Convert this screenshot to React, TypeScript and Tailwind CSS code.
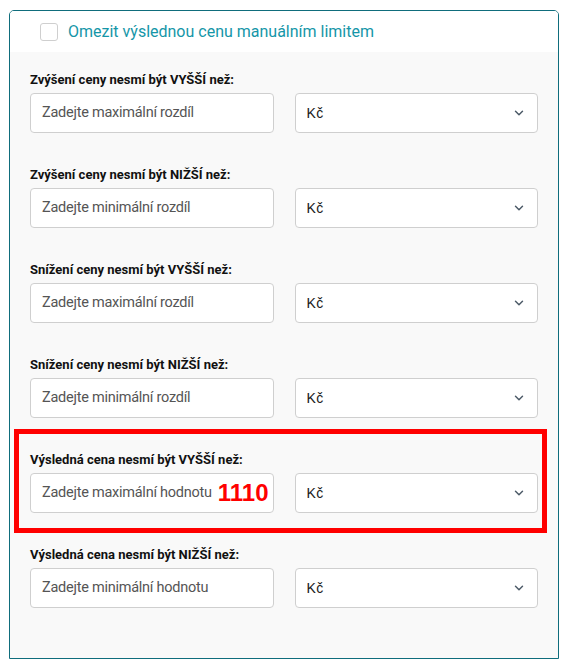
import { ChevronDown } from 'lucide-react'

type Row = {
  label: string
  placeholder: string
  highlight?: string
}

const ROWS: Row[] = [
  { label: 'Zvýšení ceny nesmí být VYŠŠÍ než:', placeholder: 'Zadejte maximální rozdíl' },
  { label: 'Zvýšení ceny nesmí být NIŽŠÍ než:', placeholder: 'Zadejte minimální rozdíl' },
  { label: 'Snížení ceny nesmí být VYŠŠÍ než:', placeholder: 'Zadejte maximální rozdíl' },
  { label: 'Snížení ceny nesmí být NIŽŠÍ než:', placeholder: 'Zadejte minimální rozdíl' },
  {
    label: 'Výsledná cena nesmí být VYŠŠÍ než:',
    placeholder: 'Zadejte maximální hodnotu',
    highlight: '1110',
  },
  { label: 'Výsledná cena nesmí být NIŽŠÍ než:', placeholder: 'Zadejte minimální hodnotu' },
]

function LimitRow({ row }: { row: Row }) {
  return (
    <div className="relative">
      {row.highlight ? (
        <div className="pointer-events-none absolute -top-[21px] -bottom-[20px] -left-[16px] -right-[9px] border-[5px] border-[#ff0000]" />
      ) : null}
      <p className="text-[13px] leading-5 font-bold text-[#111]">{row.label}</p>
      <div className="mt-[3px] grid grid-cols-2 gap-x-[21px]">
        <div className="relative flex h-10 items-center overflow-hidden rounded border border-[#cfcfcf] bg-white pl-[11px]">
          <span className="text-[14.5px] tracking-[-0.25px] whitespace-nowrap text-[#555]">{row.placeholder}</span>
          {row.highlight ? (
            <span className="ml-[6px] font-['Liberation_Sans',Arial,sans-serif] text-[24px] leading-none font-bold text-[#ff0000]">
              {row.highlight}
            </span>
          ) : null}
        </div>
        <div className="flex h-10 items-center justify-between rounded border border-[#cfcfcf] bg-white pr-[11px] pl-[11px]">
          <span className="font-['Liberation_Sans',Arial,sans-serif] text-[14px] tracking-[0.5px] text-[#1a1a1a]">Kč</span>
          <ChevronDown className="h-[14px] w-[14px] text-[#4d5b68]" strokeWidth={2.5} />
        </div>
      </div>
    </div>
  )
}

export default function App() {
  return (
    <div className="min-h-[667px] bg-white pt-[10px] pl-[9px] font-['Roboto','Noto_Sans',sans-serif]">
      <div className="flex h-[649px] w-[550px] flex-col overflow-hidden rounded-t-[5px] border border-[#0f6d7c] bg-[#f9f9f9]">
        <label className="flex h-[41px] shrink-0 items-center gap-[10px] bg-white pl-[30px]">
          <span className="h-[18px] w-[18px] rounded-[3px] border border-[#cfcfcf] bg-white" />
          <span className="text-[16px] text-[#1596a8]">Omezit výslednou cenu manuálním limitem</span>
        </label>
        <div className="flex flex-col gap-8 px-5 pt-[18px]">
          {ROWS.map((row) => (
            <LimitRow key={row.label} row={row} />
          ))}
        </div>
      </div>
    </div>
  )
}
